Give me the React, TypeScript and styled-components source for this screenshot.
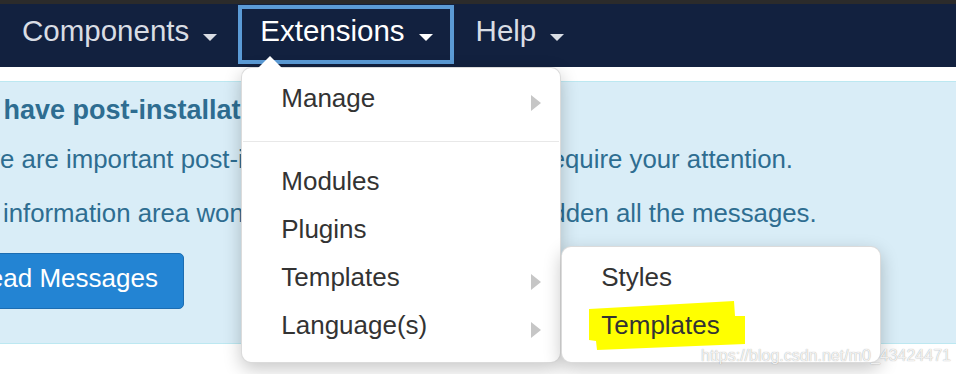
import React from "react";
import styled, { createGlobalStyle } from "styled-components";

const GlobalStyle = createGlobalStyle`
  html, body {
    margin: 0;
    padding: 0;
    background: #fff;
    overflow: hidden;
  }

  body {
    font-family: "Liberation Sans", Arial, Helvetica, sans-serif;
  }
`;

const Page = styled.div`
  position: relative;
  width: 956px;
  height: 374px;
  overflow: hidden;
  background: #fff;
`;

const TopStrip = styled.div`
  height: 4px;
  background: #2b2b2b;
`;

const NavBar = styled.nav`
  display: flex;
  align-items: flex-start;
  height: 63px;
  padding-top: 1px;
  box-sizing: border-box;
  background: #12213f;
`;

const NavItem = styled.div<{ $active?: boolean }>`
  position: relative;
  display: flex;
  align-items: center;
  gap: 14px;
  height: 44px;
  padding: 0 17px 7px 18px;
  border: 4px solid ${(p) => (p.$active ? "#5b9bd6" : "transparent")};
  font-size: 29.5px;
  line-height: 44px;
  color: ${(p) => (p.$active ? "#ffffff" : "#d9dde4")};
  cursor: default;
`;

const Caret = styled.span`
  width: 0;
  height: 0;
  margin-top: 13px;
  border-left: 7px solid transparent;
  border-right: 7px solid transparent;
  border-top: 7px solid currentColor;
`;

const Dropdown = styled.div`
  position: absolute;
  left: -1px;
  top: 58px;
  width: 320px;
  box-sizing: border-box;
  padding: 6px 0 13px;
  background: #fff;
  border: 1px solid rgba(0, 0, 0, 0.14);
  border-radius: 10px;
  box-shadow: 0 6px 18px rgba(0, 0, 0, 0.22);
  color: #333;
  font-size: 26px;
  line-height: 48px;
  z-index: 10;

  &::before {
    content: "";
    position: absolute;
    top: -12px;
    left: 16px;
    border-left: 12.5px solid transparent;
    border-right: 12.5px solid transparent;
    border-bottom: 12px solid #fff;
  }
`;

const SubMenu = styled(Dropdown)`
  left: calc(100% + 1px);
  top: -7px;

  &::before {
    display: none;
  }
`;

const MenuRow = styled.div`
  position: relative;
  display: flex;
  align-items: center;
  justify-content: space-between;
  height: 48px;
  padding: 0 19px 0 39px;
`;

const RowLabel = styled.span`
  position: relative;
  z-index: 1;
`;

const SubArrow = styled.span`
  width: 0;
  height: 0;
  margin-top: 10px;
  border-top: 8.5px solid transparent;
  border-bottom: 8.5px solid transparent;
  border-left: 10px solid #c6c6c6;
`;

const Divider = styled.div`
  height: 1px;
  margin: 19px 1px 15px;
  background: #e8e8e8;
`;

const Marker = styled.svg`
  position: absolute;
  left: 0;
  top: 0;
  z-index: 0;
`;

const Alert = styled.section`
  margin-top: 14px;
  padding: 15px 0 34px;
  background: #d9edf7;
  border-top: 1px solid #bce8f1;
  border-bottom: 1px solid #bce8f1;
  color: #2e6d91;
`;

const AlertBody = styled.div`
  margin-left: -53px;
  white-space: nowrap;
`;

const AlertHeading = styled.h4`
  margin: 0 0 9px;
  font-size: 27px;
  line-height: 26px;
  font-weight: bold;
`;

const AlertText = styled.p`
  margin: 0;
  font-size: 25.8px;
  line-height: 54px;
`;

const PrimaryButton = styled.button`
  display: block;
  height: 56px;
  box-sizing: border-box;
  margin: 13px 0 0 -3px;
  padding: 0 25px 6px;
  font-family: inherit;
  font-size: 26px;
  line-height: 48px;
  color: #fff;
  background: #2384d3;
  border: 1px solid #1c6db2;
  border-radius: 5px;
`;

const Watermark = styled.div`
  position: absolute;
  left: 701px;
  top: 348px;
  font-size: 16px;
  line-height: 16px;
  color: rgba(255, 255, 255, 0.85);
  text-shadow: 0 0 1px rgba(0, 0, 0, 0.4);
  z-index: 20;
`;

const App = () => {
  return (
    <Page>
      <GlobalStyle />
      <TopStrip />
      <NavBar>
        <NavItem>
          Components
          <Caret />
        </NavItem>
        <NavItem $active>
          Extensions
          <Caret />
          <Dropdown>
            <MenuRow>
              <RowLabel>Manage</RowLabel>
              <SubArrow />
            </MenuRow>
            <Divider />
            <MenuRow>
              <RowLabel>Modules</RowLabel>
            </MenuRow>
            <MenuRow>
              <RowLabel>Plugins</RowLabel>
            </MenuRow>
            <MenuRow>
              <RowLabel>Templates</RowLabel>
              <SubArrow />
              <SubMenu>
                <MenuRow>
                  <RowLabel>Styles</RowLabel>
                </MenuRow>
                <MenuRow>
                  <Marker width="190" height="50" viewBox="0 0 190 50">
                    <polygon
                      points="27,8 172,0 173,15 183,15 183,43 35,49 34,40 27,39"
                      fill="#ffff00"
                    />
                  </Marker>
                  <RowLabel>Templates</RowLabel>
                </MenuRow>
              </SubMenu>
            </MenuRow>
            <MenuRow>
              <RowLabel>Language(s)</RowLabel>
              <SubArrow />
            </MenuRow>
          </Dropdown>
        </NavItem>
        <NavItem>
          Help
          <Caret />
        </NavItem>
      </NavBar>
      <Alert>
        <AlertBody>
          <AlertHeading>You have post-installation messages</AlertHeading>
          <AlertText>
            There are important post-installation messages that require your
            attention.
          </AlertText>
          <AlertText>
            This information area won't appear when you have hidden all the
            messages.
          </AlertText>
          <PrimaryButton>Read Messages</PrimaryButton>
        </AlertBody>
      </Alert>
      <Watermark>https://blog.csdn.net/m0_43424471</Watermark>
    </Page>
  );
};

export default App;
